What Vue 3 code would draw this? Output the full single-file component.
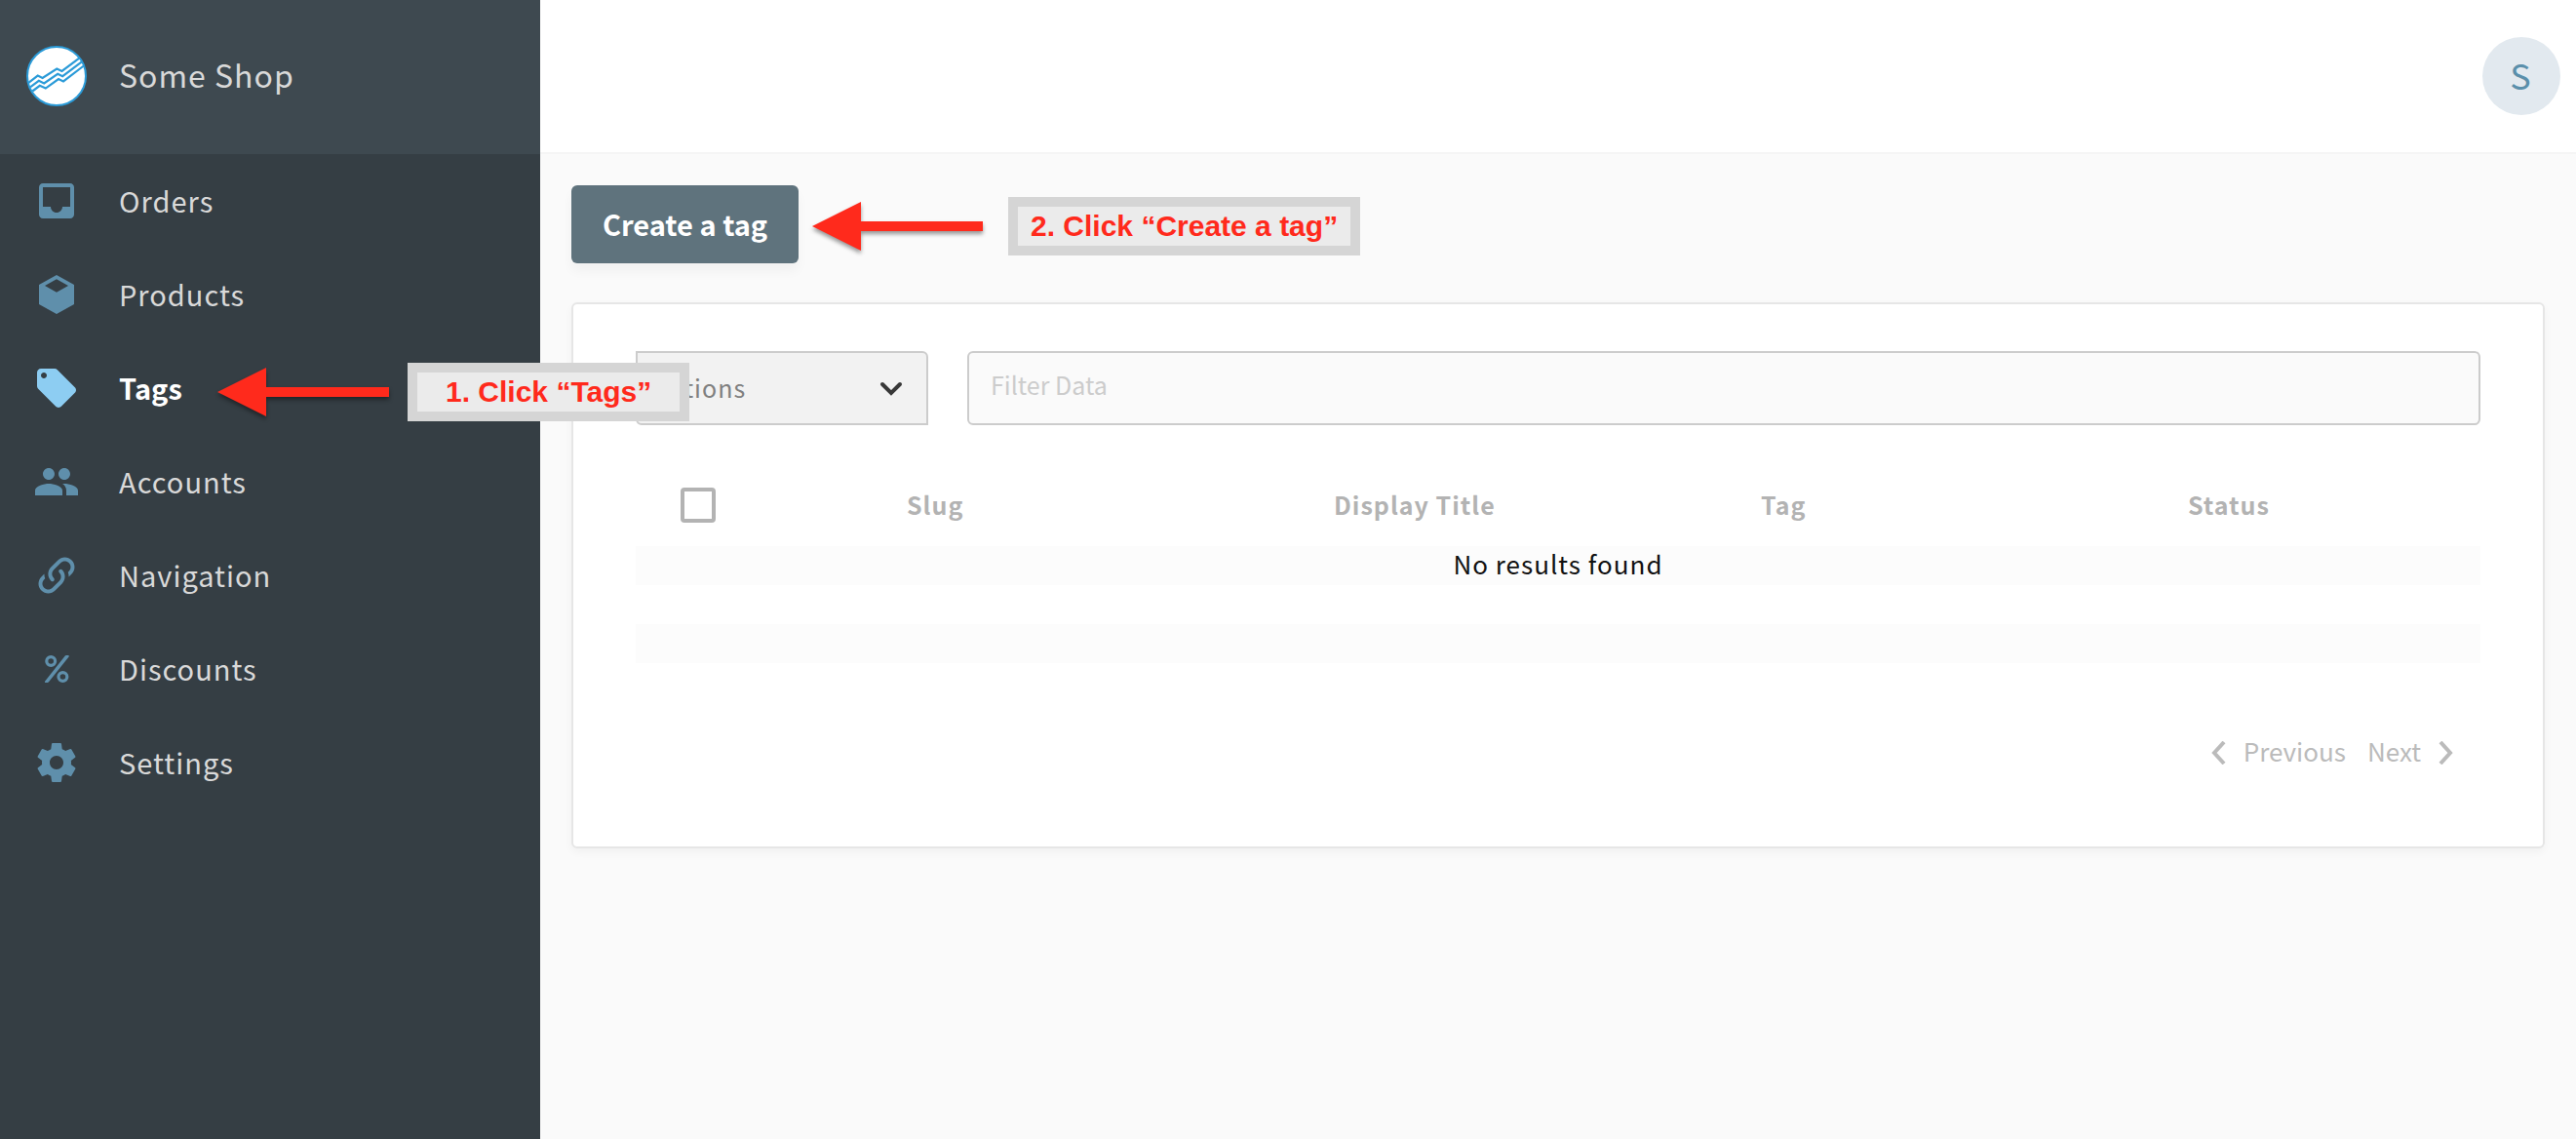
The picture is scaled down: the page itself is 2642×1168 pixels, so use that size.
<script setup>
import { ref } from 'vue'

const filter = ref('')
const allSelected = ref(false)

const columns = ['Slug', 'Display Title', 'Tag', 'Status']

const navItems = [
  {
    label: 'Orders',
    path: 'M19 3H4.99c-1.11 0-1.98.9-1.98 2L3 19c0 1.1.88 2 1.99 2H19c1.1 0 2-.9 2-2V5c0-1.1-.9-2-2-2zm0 12h-4c0 1.66-1.35 3-3 3s-3-1.34-3-3H4.99V5H19v10z'
  },
  {
    label: 'Products',
    path: 'M12 2l9 5v10l-9 5-9-5V7zM12 4.15L6 7.5l6 3.35 6-3.35z'
  },
  {
    label: 'Tags',
    active: true,
    path: 'M21.41 11.58l-9-9C12.05 2.22 11.55 2 11 2H4c-1.1 0-2 .9-2 2v7c0 .55.22 1.05.59 1.42l9 9c.36.36.86.58 1.41.58.55 0 1.05-.22 1.41-.59l7-7c.37-.36.59-.86.59-1.41 0-.55-.23-1.06-.59-1.42zM5.5 7C4.67 7 4 6.33 4 5.5S4.67 4 5.5 4 7 4.67 7 5.5 6.33 7 5.5 7z'
  },
  {
    label: 'Accounts',
    path: 'M16 11c1.66 0 2.99-1.34 2.99-3S17.66 5 16 5c-1.66 0-3 1.34-3 3s1.34 3 3 3zm-8 0c1.66 0 2.99-1.34 2.99-3S9.66 5 8 5C6.34 5 5 6.34 5 8s1.34 3 3 3zm0 2c-2.33 0-7 1.17-7 3.5V19h14v-2.5c0-2.33-4.67-3.5-7-3.5zm8 0c-.29 0-.62.02-.97.05 1.16.84 1.97 1.97 1.97 3.45V19h6v-2.5c0-2.33-4.67-3.5-7-3.5z'
  },
  {
    label: 'Navigation',
    path: 'M10.59 13.41C11 13.8 11 14.44 10.59 14.83C10.2 15.22 9.56 15.22 9.17 14.83C7.22 12.88 7.22 9.71 9.17 7.76L12.71 4.22C14.66 2.27 17.83 2.27 19.78 4.22C21.73 6.17 21.73 9.34 19.78 11.29L18.29 12.78C18.3 11.96 18.17 11.14 17.89 10.36L18.36 9.88C19.54 8.71 19.54 6.81 18.36 5.64C17.19 4.46 15.29 4.46 14.12 5.64L10.59 9.17C9.41 10.34 9.41 12.24 10.59 13.41M13.41 9.17C13.8 8.78 14.44 8.78 14.83 9.17C16.78 11.12 16.78 14.29 14.83 16.24L11.29 19.78C9.34 21.73 6.17 21.73 4.22 19.78C2.27 17.83 2.27 14.66 4.22 12.71L5.71 11.22C5.7 12.04 5.83 12.86 6.11 13.65L5.64 14.12C4.46 15.29 4.46 17.19 5.64 18.36C6.81 19.54 8.71 19.54 9.88 18.36L13.41 14.83C14.59 13.66 14.59 11.76 13.41 10.59C13 10.2 13 9.56 13.41 9.17Z'
  },
  {
    label: 'Discounts',
    path: 'M9.1 5a3 3 0 1 0 0 6 3 3 0 0 0 0-6zm0 1.6a1.4 1.4 0 1 1 0 2.8 1.4 1.4 0 0 1 0-2.8zM15.2 13a3 3 0 1 0 0 6 3 3 0 0 0 0-6zm0 1.6a1.4 1.4 0 1 1 0 2.8 1.4 1.4 0 0 1 0-2.8zM17 5h1c.4 0 .5.4.3.7L8.1 18.5c-.3.4-.6.5-1 .5h-.7c-.4 0-.6-.4-.3-.8L16.2 5.5c.2-.3.4-.5.8-.5z'
  },
  {
    label: 'Settings',
    path: 'M19.43 12.98c.04-.32.07-.64.07-.98s-.03-.66-.07-.98l2.11-1.65c.19-.15.24-.42.12-.64l-2-3.46c-.12-.22-.39-.3-.61-.22l-2.49 1c-.52-.4-1.08-.73-1.69-.98l-.38-2.65C14.46 2.18 14.25 2 14 2h-4c-.25 0-.46.18-.49.42l-.38 2.65c-.61.25-1.17.59-1.69.98l-2.49-1c-.23-.09-.49 0-.61.22l-2 3.46c-.13.22-.07.49.12.64l2.11 1.65c-.04.32-.07.65-.07.98s.03.66.07.98l-2.11 1.65c-.19.15-.24.42-.12.64l2 3.46c.12.22.39.3.61.22l2.49-1c.52.4 1.08.73 1.69.98l.38 2.65c.03.24.24.42.49.42h4c.25 0 .46-.18.49-.42l.38-2.65c.61-.25 1.17-.59 1.69-.98l2.49 1c.23.09.49 0 .61-.22l2-3.46c.12-.22.07-.49-.12-.64l-2.11-1.65zM12 15.5c-1.93 0-3.5-1.57-3.5-3.5s1.57-3.5 3.5-3.5 3.5 1.57 3.5 3.5-1.57 3.5-3.5 3.5z'
  }
]
</script>

<template>
  <div class="app">
    <aside class="sidebar">
      <a class="brand" href="#">
        <svg class="logo" viewBox="0 0 62 62" aria-hidden="true">
          <circle cx="31" cy="31" r="30" fill="#fff" stroke="#2b9bd8" stroke-width="2" />
          <g fill="none" stroke="#2b9bd8" stroke-width="2.2">
            <path d="M2.3 37.8L11.7 30.6L16.6 33L31.3 23.5L36.5 26L54.3 12.6" />
            <path d="M4 42.3L12.8 35.8L18.2 38.4L32.2 28.8L37.2 31.2L57.2 16.2" />
            <path d="M6.3 46.5L13.8 40.8L19.8 43.6L33 34L38 36.4L59.5 20" />
          </g>
        </svg>
        <span>Some Shop</span>
      </a>
      <nav>
        <a
          v-for="item in navItems"
          :key="item.label"
          href="#"
          class="nav-item"
          :class="{ active: item.active }"
        >
          <svg viewBox="0 0 24 24" aria-hidden="true">
            <path :d="item.path" fill="currentColor" fill-rule="evenodd" />
          </svg>
          <span>{{ item.label }}</span>
        </a>
      </nav>
    </aside>

    <div class="main">
      <header class="topbar">
        <button class="avatar" type="button" aria-label="Account">S</button>
      </header>

      <main class="content">
        <button class="create" type="button">Create a tag</button>

        <section class="card">
          <div class="toolbar">
            <div class="select">
              <select aria-label="Actions">
                <option>Actions</option>
              </select>
              <svg viewBox="0 0 24 16" aria-hidden="true">
                <path d="M3 3L12 12L21 3" fill="none" stroke="currentColor" stroke-width="4" stroke-linecap="round" />
              </svg>
            </div>
            <input v-model="filter" class="filter" type="text" placeholder="Filter Data" aria-label="Filter Data" />
          </div>

          <table>
            <colgroup>
              <col class="col-check" />
              <col v-for="c in columns" :key="c" />
            </colgroup>
            <thead>
              <tr>
                <th class="check"><input v-model="allSelected" type="checkbox" aria-label="Select all" /></th>
                <th v-for="c in columns" :key="c" scope="col">{{ c }}</th>
              </tr>
            </thead>
            <tbody>
              <tr><td colspan="5">No results found</td></tr>
              <tr><td colspan="5"></td></tr>
              <tr><td colspan="5"></td></tr>
            </tbody>
          </table>

          <div class="pager">
            <button type="button" disabled>
              <svg viewBox="0 0 16 24" aria-hidden="true">
                <path d="M13 1L3 12L13 23" fill="none" stroke="currentColor" stroke-width="4" />
              </svg>
              <span>Previous</span>
            </button>
            <button type="button" disabled>
              <span>Next</span>
              <svg viewBox="0 0 16 24" aria-hidden="true">
                <path d="M3 1L13 12L3 23" fill="none" stroke="currentColor" stroke-width="4" />
              </svg>
            </button>
          </div>
        </section>
      </main>
    </div>

    <div class="note note-tags">
      <svg class="arrow" width="176" height="60" viewBox="0 0 176 60" aria-hidden="true">
        <path d="M0 30L50 5V25H176V35H50V55Z" fill="#ff2a1c" />
      </svg>
      <p>1. Click “Tags”</p>
    </div>
    <div class="note note-create">
      <svg class="arrow" width="175" height="60" viewBox="0 0 175 60" aria-hidden="true">
        <path d="M0 30L50 5V25H175V35H50V55Z" fill="#ff2a1c" />
      </svg>
      <p>2. Click “Create a tag”</p>
    </div>
  </div>
</template>

<style>
body {
  background: #fafafa;
}
</style>

<style scoped>
.app {
  position: relative;
  display: flex;
  min-height: 100vh;
  font-family: "Noto Sans CJK SC", "Noto Sans", sans-serif;
  font-size: 26px;
  line-height: 36px;
  color: #111;
}

.app *,
.app {
  box-sizing: border-box;
}

button,
input,
select {
  font: inherit;
}

.sidebar {
  flex: 0 0 554px;
  background: #353e44;
}

.brand,
.nav-item {
  display: flex;
  align-items: center;
  color: #d9d9d9;
  text-decoration: none;
  letter-spacing: 1px;
}

.brand span,
.pager span {
  padding-bottom: 4px;
}

.nav-item span {
  padding-bottom: 2px;
}

.brand {
  height: 158px;
  padding: 0 27px 2px;
  gap: 33px;
  background: #3e4950;
  font-size: 32px;
}

.logo {
  width: 62px;
  height: 62px;
}

.nav-item {
  height: 96px;
  padding: 0 34px;
  gap: 40px;
  font-size: 29px;
}

.nav-item svg {
  width: 48px;
  height: 48px;
  color: #5f8fab;
}

.nav-item.active {
  color: #fff;
  font-weight: 700;
  letter-spacing: normal;
}

.nav-item.active svg {
  color: #8dcdf2;
}

.main {
  flex: 1;
  min-width: 0;
  background: #fafafa;
}

.topbar {
  display: flex;
  align-items: center;
  justify-content: flex-end;
  height: 158px;
  padding-right: 16px;
  background: #fff;
  border-bottom: 2px solid #f5f5f5;
}

.avatar {
  width: 80px;
  height: 80px;
  padding: 0 2px 4px 0;
  border: 0;
  border-radius: 50%;
  background: #e2e9ef;
  color: #5a8fab;
  font-size: 36px;
}

.content {
  padding: 32px;
}

.create {
  display: block;
  height: 80px;
  padding: 0 32px 2px;
  border: 0;
  border-radius: 6px;
  background: #5f737d;
  box-shadow: 0 8px 12px rgba(0, 0, 0, 0.04);
  color: #fff;
  font-size: 29px;
  font-weight: 700;
}

.card {
  margin-top: 40px;
  padding: 48px 64px 76px;
  background: #fff;
  border: 2px solid #e6e6e6;
  border-radius: 6px;
  box-shadow: 0 4px 8px rgba(0, 0, 0, 0.04);
}

.toolbar {
  display: flex;
  gap: 40px;
  margin-bottom: 40px;
  font-size: 25px;
}

.select {
  position: relative;
  flex: 0 0 300px;
}

.select select {
  appearance: none;
  width: 100%;
  height: 76px;
  padding: 0 18px 2px;
  border: 2px solid #ccc;
  border-radius: 0 6px 0 6px;
  background: #f2f2f2;
  color: #808080;
  letter-spacing: 1px;
}

.select svg {
  position: absolute;
  top: 31px;
  right: 26px;
  width: 24px;
  height: 16px;
  color: #383838;
  pointer-events: none;
}

.filter {
  flex: 1;
  min-width: 0;
  height: 76px;
  padding: 0 22px 8px;
  border: 2px solid #ccc;
  border-radius: 6px;
  background: #fafafa;
  color: #555;
}

.filter::placeholder {
  color: #ccc;
}

table {
  width: 100%;
  table-layout: fixed;
  border-collapse: collapse;
  letter-spacing: 1px;
}

.col-check {
  width: 140px;
}

th {
  height: 84px;
  padding: 0 0 2px 138px;
  text-align: left;
  color: #b3b3b3;
  font-size: 25px;
  font-weight: 700;
}

th.check {
  padding: 0 0 0 46px;
}

th.check input {
  appearance: none;
  display: block;
  width: 36px;
  height: 36px;
  margin: 0;
  border: 4px solid #b3b3b3;
  border-radius: 4px;
}

td {
  height: 40px;
  padding: 0 0 4px;
  text-align: center;
}

tbody tr:nth-child(odd) {
  background: #fcfcfc;
}

.pager {
  display: flex;
  justify-content: flex-end;
  gap: 22px;
  margin-top: 72px;
  padding-right: 28px;
}

.pager button {
  display: flex;
  align-items: center;
  gap: 17px;
  padding: 0;
  border: 0;
  background: none;
  color: #bbb;
}

.pager svg {
  width: 16px;
  height: 24px;
}

.note {
  position: absolute;
  display: flex;
  align-items: center;
}

.note-tags {
  left: 223px;
  top: 372px;
  gap: 19px;
}

.note-create {
  left: 833px;
  top: 202px;
  gap: 26px;
}

.note p {
  margin: 0;
  height: 60px;
  border: 10px solid #d5d5d5;
  background: #ebebeb;
  color: #ff2a1c;
  font: 700 30px/40px "Liberation Sans", Arial, sans-serif;
  white-space: nowrap;
}

.note-tags p {
  padding: 0 29px;
}

.note-create p {
  padding: 0 13px;
}

.arrow {
  filter: drop-shadow(0 3px 2px rgba(0, 0, 0, 0.4));
}
</style>
